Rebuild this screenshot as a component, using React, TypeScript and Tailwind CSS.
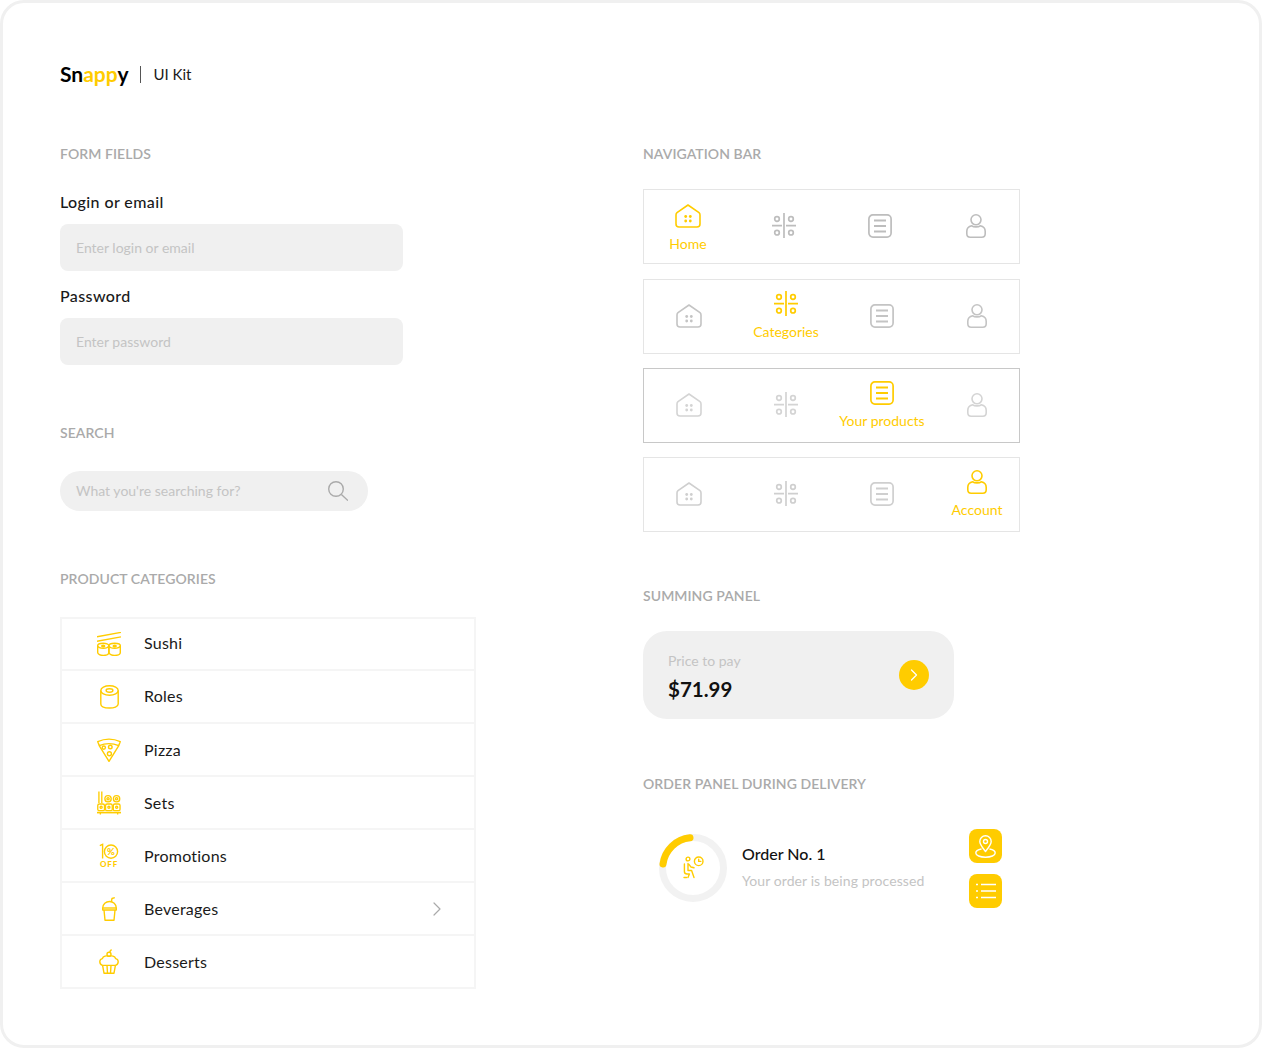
import { ChevronRight } from 'lucide-react'
import type { ReactNode } from 'react'

const YELLOW = '#ffcc00'

function HomeIcon({ color }: { color: string }) {
  return (
    <svg width="26" height="24" viewBox="0 0 26 24" fill="none" stroke={color} strokeWidth="1.6" strokeLinejoin="round">
      <path d="M13 1 L24 8.6 Q25 9.4 25 11 V20 Q25 23 22 23 H4 Q1 23 1 20 V11 Q1 9.4 2 8.6 Z" />
      <g fill={color} stroke="none">
        <circle cx="10.7" cy="12.5" r="1.4" />
        <circle cx="15.3" cy="12.5" r="1.4" />
        <circle cx="10.7" cy="17" r="1.4" />
        <circle cx="15.3" cy="17" r="1.4" />
      </g>
    </svg>
  )
}

function FiltersIcon({ color }: { color: string }) {
  return (
    <svg width="24" height="25" viewBox="0 0 24 25" fill="none" stroke={color} strokeWidth="1.7">
      <path d="M12 0 V25 M0 12.7 H10 M14 12.7 H24" />
      <circle cx="5" cy="6" r="2.3" />
      <circle cx="19" cy="6" r="2.3" />
      <circle cx="5" cy="19.7" r="2.3" />
      <circle cx="19" cy="19.7" r="2.3" />
    </svg>
  )
}

function ListIcon({ color }: { color: string }) {
  return (
    <svg width="24" height="24" viewBox="0 0 24 24" fill="none" stroke={color} strokeWidth="1.7">
      <rect x="0.9" y="0.9" width="22.2" height="22.2" rx="4" />
      <path d="M6 6.5 H18 M6 12 H18 M6 17.5 H18" strokeWidth="1.9" />
    </svg>
  )
}

function UserIcon({ color }: { color: string }) {
  return (
    <svg width="20" height="24" viewBox="0 0 20 24" fill="none" stroke={color} strokeWidth="1.6">
      <circle cx="10" cy="5.8" r="5" />
      <path d="M5.8 11.8 C3 12.4 0.8 14.4 0.8 17.2 V19.8 Q0.8 23.2 4.2 23.2 H15.8 Q19.2 23.2 19.2 19.8 V17.2 C19.2 14.4 17 12.4 14.2 11.8 C12.5 13.2 7.5 13.2 5.8 11.8 Z" />
    </svg>
  )
}

function SushiIcon() {
  return (
    <svg width="24" height="24" viewBox="0 0 24 24" fill="none" stroke={YELLOW} strokeWidth="1.4">
      <path d="M0 4.7 L24 0.4 M0 9.2 L24 4.9" />
      <path d="M0.7 13.6 C0.7 10.4 11.8 10.4 11.8 13.6 V20.5 C11.8 24.4 0.7 24.4 0.7 20.5 Z" />
      <path d="M12 13.6 C12 10.4 23.3 10.4 23.3 13.6 V20.5 C23.3 24.4 12 24.4 12 20.5 Z" />
      <path d="M0.7 14 C2 17 10.4 17 11.8 14 M12 14 C13.4 17 22 17 23.3 14" />
      <ellipse cx="6.2" cy="14" rx="1.5" ry="0.8" />
      <ellipse cx="17.7" cy="14" rx="1.5" ry="0.8" />
    </svg>
  )
}

function RolesIcon() {
  return (
    <svg width="19" height="24" viewBox="0 0 19 24" fill="none" stroke={YELLOW} strokeWidth="1.4">
      <ellipse cx="9.5" cy="5.5" rx="8.7" ry="4.8" />
      <ellipse cx="9.5" cy="5.5" rx="3.4" ry="1.7" />
      <path d="M0.8 5.5 V19 C0.8 24.4 18.2 24.4 18.2 19 V5.5" />
    </svg>
  )
}

function PizzaIcon() {
  return (
    <svg width="24" height="24" viewBox="0 0 24 24" fill="none" stroke={YELLOW} strokeWidth="1.4" strokeLinejoin="round">
      <path d="M0.7 3.6 Q12 -1.4 23.3 3.6 L21.8 7.6 Q12 3.6 2.2 7.6 Z" />
      <path d="M2.2 7.6 L12 23.4 L21.8 7.6" />
      <circle cx="6.8" cy="9.6" r="1.6" />
      <circle cx="13.3" cy="9" r="1.8" />
      <circle cx="12.4" cy="15.7" r="2" />
    </svg>
  )
}

function SetsIcon() {
  return (
    <svg width="25" height="24" viewBox="0 0 25 24" fill="none" stroke={YELLOW} strokeWidth="1.4">
      <path d="M2 0 V12 M5 0 V12" />
      <circle cx="11.5" cy="7.6" r="3.3" />
      <circle cx="11.5" cy="7.6" r="1.2" />
      <circle cx="20.4" cy="7.6" r="3.3" />
      <circle cx="20.4" cy="7.6" r="1.2" />
      <rect x="0.8" y="13" width="7" height="7" rx="1.6" />
      <rect x="8.9" y="13" width="7" height="7" rx="1.6" />
      <rect x="17" y="13" width="7" height="7" rx="1.6" />
      <circle cx="4.3" cy="16.5" r="1.1" />
      <circle cx="12.4" cy="16.5" r="1.1" />
      <circle cx="20.5" cy="16.5" r="1.1" />
      <path d="M0 22 H25" strokeWidth="1.7" />
      <path d="M3.5 22 V24 M21.5 22 V24" />
    </svg>
  )
}

function PromoIcon() {
  return (
    <svg width="20" height="26" viewBox="0 0 20 26" fill="none" stroke={YELLOW} strokeWidth="1.4">
      <path d="M0.8 2.6 L3.6 1.4 V15.6" />
      <circle cx="12" cy="8.6" r="6.6" />
      <text x="12" y="12" textAnchor="middle" fontSize="9.5" fontWeight="900" fontFamily="Lato, sans-serif" fill={YELLOW} stroke="none">%</text>
      <text x="10" y="24.2" textAnchor="middle" fontSize="8" fontWeight="900" letterSpacing="0.9" fontFamily="Lato, sans-serif" fill={YELLOW} stroke="none">OFF</text>
    </svg>
  )
}

function BeverageIcon() {
  return (
    <svg width="15" height="24" viewBox="0 0 15 24" fill="none" stroke={YELLOW} strokeWidth="1.4" strokeLinejoin="round">
      <path d="M9.3 5 L10 1.5 L12.8 0.7" />
      <path d="M0.7 11 C0.7 7 4 4.5 7.5 4.5 C11 4.5 14.3 7 14.3 11 V13 H0.7 Z" />
      <path d="M0.7 11 H14.3" />
      <path d="M2 13 L3 23.3 H12 L13 13" />
    </svg>
  )
}

function DessertIcon() {
  return (
    <svg width="20" height="25" viewBox="0 0 20 25" fill="none" stroke={YELLOW} strokeWidth="1.4" strokeLinejoin="round">
      <circle cx="10" cy="5.2" r="2" />
      <path d="M10.8 3.4 Q11 1.4 12.6 0.6" />
      <path d="M3.6 16.4 C-0.2 15.4 0 10.2 3.4 9.6 C4 6.8 7.6 6.4 10 7.4 C12.4 6.4 16 6.8 16.6 9.6 C20 10.2 20.2 15.4 16.4 16.4 Z" />
      <path d="M3.6 16.4 L5 24.2 H15 L16.4 16.4 M8 16.4 L8.5 24.2 M12 16.4 L11.5 24.2" />
    </svg>
  )
}

function WaitingIcon() {
  return (
    <svg width="21" height="24" viewBox="0 0 21 24" fill="none" stroke={YELLOW} strokeWidth="1.4" strokeLinecap="round" strokeLinejoin="round">
      <circle cx="5" cy="3" r="1.9" />
      <circle cx="15.7" cy="5.3" r="4.3" />
      <path d="M15.7 3.2 V5.4 H17.8" />
      <path d="M5 7.5 V14.5 H8.6 L11 21.5 M5 8 C6.5 8 7 10.5 8 11 L11 11.8" />
      <path d="M1.4 8 V15.5 Q1.4 18 4 18 H6.4 L5 21.5 M1 21.5 H3.5" />
    </svg>
  )
}

function OrderRing() {
  return (
    <svg width="68" height="68" viewBox="0 0 68 68" fill="none">
      <circle cx="34" cy="34" r="30.5" stroke="#f2f2f2" strokeWidth="7" />
      <path d="M4 30 A30.5 30.5 0 0 1 31 3.8" stroke={YELLOW} strokeWidth="7" strokeLinecap="round" />
    </svg>
  )
}

function Heading({ children }: { children: ReactNode }) {
  return <h2 className="h-5 text-sm leading-5 font-semibold uppercase text-[#aaaaaa] tracking-[0.005em]">{children}</h2>
}

function Field({ label, placeholder }: { label: string; placeholder: string }) {
  return (
    <div>
      <label className="block h-6 text-base leading-[22px] font-medium text-[#1a1a1a] tracking-[0.025em]">{label}</label>
      <input
        placeholder={placeholder}
        className="mt-[9px] block h-[47px] w-[343px] rounded-lg bg-[#f0f0f0] px-4 text-sm text-[#1a1a1a] placeholder:text-[#c4c4c4] outline-none"
      />
    </div>
  )
}

const categories = [
  { name: 'Sushi', icon: <SushiIcon /> },
  { name: 'Roles', icon: <RolesIcon /> },
  { name: 'Pizza', icon: <PizzaIcon /> },
  { name: 'Sets', icon: <SetsIcon /> },
  { name: 'Promotions', icon: <PromoIcon /> },
  { name: 'Beverages', icon: <BeverageIcon />, arrow: true },
  { name: 'Desserts', icon: <DessertIcon /> },
]

const navTabs = [
  { label: 'Home', Icon: HomeIcon },
  { label: 'Categories', Icon: FiltersIcon },
  { label: 'Your products', Icon: ListIcon },
  { label: 'Account', Icon: UserIcon },
]

function NavBar({
  active,
  mutedColor,
  className,
  activeClass = '',
  spread = false,
}: {
  active: number
  mutedColor: string
  className: string
  activeClass?: string
  spread?: boolean
}) {
  return (
    <div className={`flex h-[75px] w-[377px] items-center gap-6 border bg-white pb-0.5 ${className}`}>
      {navTabs.map(({ label, Icon }, i) => (
        <div
          key={label}
          className={`flex w-[72px] flex-col items-center ${i === active ? activeClass : ''} ${spread && i === 1 ? 'ml-px' : ''} ${spread && i === 3 ? '-ml-px' : ''}`}
        >
          <Icon color={i === active ? YELLOW : mutedColor} />
          {i === active && (
            <span className="mt-[7px] h-[18px] whitespace-nowrap text-sm leading-[18px] text-[#ffcc00]">{label}</span>
          )}
        </div>
      ))}
    </div>
  )
}

export default function App() {
  return (
    <div className="h-[1048px] w-[1262px] overflow-hidden rounded-[24px] border-[3px] border-[#f0f0f0] bg-white pl-[57px] pt-[59px] font-[Lato,sans-serif]">
      {/* Logo */}
      <div className="flex h-6 items-center">
        <span className="text-[21px] font-bold leading-[22px] text-black">
          Sn<span className="text-[#ffcc00]">app</span>y
        </span>
        <span className="ml-3 h-[17px] w-px bg-[#555555]" />
        <span className="ml-3 text-[15px] text-[#1a1a1a]">UI Kit</span>
      </div>

      <div className="mt-[58px] flex">
        {/* Left column */}
        <div className="w-[583px]">
          <Heading>Form fields</Heading>
          <div className="mt-[27px]">
            <Field label="Login or email" placeholder="Enter login or email" />
          </div>
          <div className="mt-[14px]">
            <Field label="Password" placeholder="Enter password" />
          </div>

          <div className="mt-[58px]">
            <Heading>Search</Heading>
          </div>
          <div className="mt-7 flex h-10 w-[308px] items-center justify-between rounded-full bg-[#f0f0f0] pl-4 pr-5">
            <span className="text-sm text-[#c4c4c4]">What you're searching for?</span>
            <svg width="20" height="20" viewBox="0 0 20 20" fill="none" stroke="#aaaaaa" strokeWidth="1.4">
              <circle cx="8" cy="8" r="7.3" />
              <path d="M13.4 13.4 L20 19.6" />
            </svg>
          </div>

          <div className="mt-[58px]">
            <Heading>Product categories</Heading>
          </div>
          <ul className="mt-7 w-[416px] border-2 border-[#f5f5f5]">
            {categories.map((c, i) => (
              <li
                key={c.name}
                className={`flex items-center pl-[35px] pr-[25px] ${i === 0 ? 'h-[50px]' : 'h-[53px] border-t-2 border-[#f5f5f5]'}`}
              >
                <span className="flex w-[24px] justify-center">{c.icon}</span>
                <span className={`ml-[23px] flex-1 text-base text-[#1a1a1a] tracking-[0.015em] ${i < 2 ? 'pb-0.5' : ''}`}>{c.name}</span>
                {c.arrow && <ChevronRight size={24} strokeWidth={1.2} color="#aaaaaa" />}
              </li>
            ))}
          </ul>
        </div>

        {/* Right column */}
        <div>
          <Heading>Navigation bar</Heading>
          <div className="mt-[25px]">
            <NavBar active={0} mutedColor="#bdbdbd" className="border-[#e5e5e5] pl-2" activeClass="mt-[6px]" />
          </div>
          <div className="mt-[15px]">
            <NavBar active={1} mutedColor="#c4c4c4" className="border-[#e5e5e5] pl-[9px]" spread />
          </div>
          <div className="mt-[14px]">
            <NavBar active={2} mutedColor="#d4d4d4" className="border-[#c8c8c8] pl-[9px]" activeClass="mt-0.5" spread />
          </div>
          <div className="mt-[14px]">
            <NavBar active={3} mutedColor="#cfcfcf" className="border-[#e5e5e5] pl-[9px]" activeClass="mt-0.5" spread />
          </div>

          <div className="mt-[54px]">
            <Heading>Summing panel</Heading>
          </div>
          <div className="mt-[25px] flex h-[88px] w-[311px] items-center justify-between rounded-[24px] bg-[#f0f0f0] px-[25px]">
            <div className="pt-1">
              <p className="h-5 text-sm leading-5 text-[#c4c4c4]">Price to pay</p>
              <p className="mt-1 h-7 text-[20.5px] font-bold leading-7 text-[#111111]">$71.99</p>
            </div>
            <button className="flex h-[30px] w-[30px] items-center justify-center rounded-full bg-[#ffcc00]">
              <ChevronRight size={20} strokeWidth={1.5} color="#ffffff" />
            </button>
          </div>

          <div className="mt-[55px]">
            <Heading>Order panel during delivery</Heading>
          </div>
          <div className="mt-[35px] flex items-center pl-4">
            <div className="relative mb-px flex h-[68px] w-[68px] shrink-0 items-center justify-center">
              <div className="absolute inset-0">
                <OrderRing />
              </div>
              <div className="relative">
                <WaitingIcon />
              </div>
            </div>
            <div className="ml-[15px] w-[227px] pb-[5px]">
              <p className="h-6 text-base font-medium leading-6 text-[#111111]">Order No. 1</p>
              <p className="mt-[5px] h-5 text-sm leading-5 text-[#c4c4c4] tracking-[0.006em]">Your order is being processed</p>
            </div>
            <div className="flex flex-col gap-[11px]">
              <button className="flex h-[34px] w-[33px] items-center justify-center rounded-lg bg-[#ffcc00]">
                <svg width="21" height="23" viewBox="0 0 21 23" fill="none" stroke="#ffffff" strokeWidth="1.4" strokeLinejoin="round">
                  <path d="M10.5 16.5 C7 12 4.8 9.5 4.8 6.5 C4.8 3.2 7.3 0.8 10.5 0.8 C13.7 0.8 16.2 3.2 16.2 6.5 C16.2 9.5 14 12 10.5 16.5 Z" />
                  <circle cx="10.5" cy="6.5" r="2" />
                  <path d="M6.5 14 C3 14.6 0.8 16 0.8 18 C0.8 20.4 5 22.2 10.5 22.2 C16 22.2 20.2 20.4 20.2 18 C20.2 16 18 14.6 14.5 14" />
                </svg>
              </button>
              <button className="flex h-[34px] w-[33px] items-center justify-center rounded-lg bg-[#ffcc00]">
                <svg width="20" height="16" viewBox="0 0 20 16" fill="none" stroke="#ffffff" strokeWidth="1.6">
                  <path d="M0 1.5 H2 M0 8 H2 M0 14.5 H2 M5 1.5 H20 M5 8 H20 M5 14.5 H20" />
                </svg>
              </button>
            </div>
          </div>
        </div>
      </div>
    </div>
  )
}
